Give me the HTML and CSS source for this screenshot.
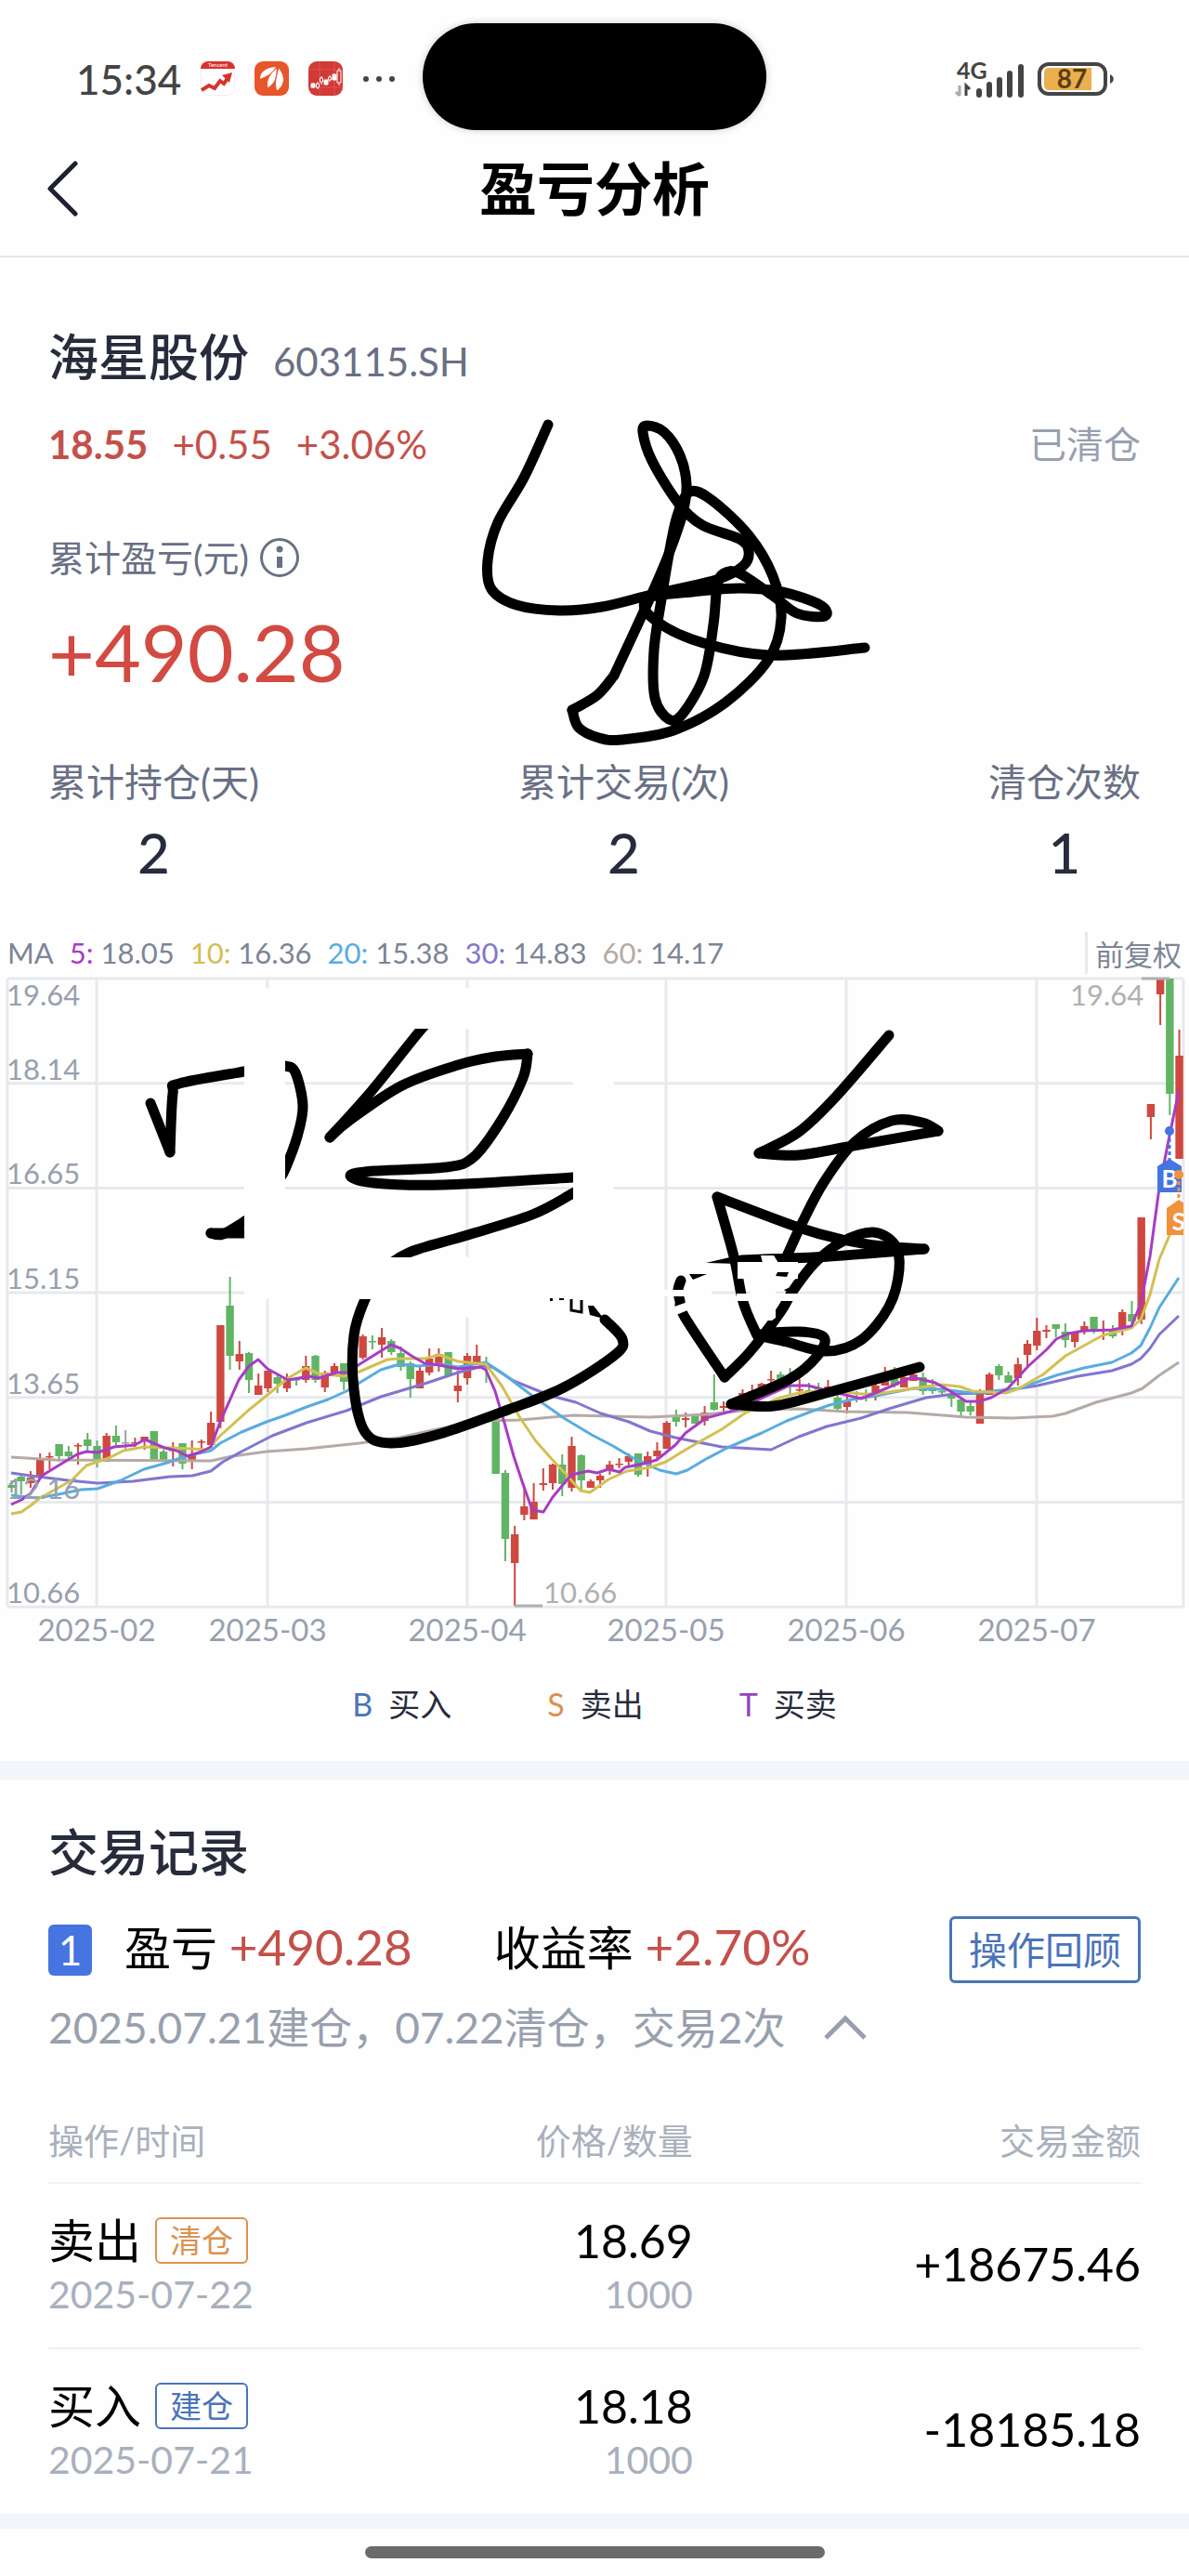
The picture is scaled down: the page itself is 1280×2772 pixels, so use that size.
FILE: index.html
```html
<!DOCTYPE html>
<html lang="zh-CN">
<head>
    <title>盈亏分析</title>
    <meta charset="utf-8">
    <meta name="viewport" content="width=device-width, initial-scale=1">
    <link rel="stylesheet" href="styles.css">
</head>
<body>
    <div class="status-bar">
        <div class="status-left">
            <span class="time">15:34</span>
            <svg class="app-icon" viewBox="0 0 37 37">
                <rect x="0.5" y="0.5" width="36" height="36" rx="8" fill="#fff" stroke="#eee"/>
                <path d="M0 8a8 8 0 0 1 8-8h21a8 8 0 0 1 8 8z" fill="#d8332c"/>
                <text x="18.5" y="6" class="app-text">Tencent</text>
                <path d="M1 31l8-5 6 3 6-8 4 3 5-7" fill="none" stroke="#d8332c" stroke-width="4"/>
                <path d="M23 15l11-3-3 11z" fill="#d8332c"/>
            </svg>
            <svg class="app-icon" viewBox="0 0 37 37">
                <rect width="37" height="37" rx="9" fill="#e8552b"/>
                <path d="M6 19C6 11 12 7 23 6c-3 6-8 9-17 13z" fill="#fff"/>
                <path d="M14 29c-2-10 3-16 10-22 1 10-2 17-10 22zM24 32c-3-8-1-16 2-25 7 8 8 18-2 25z" fill="#fff" stroke="#e8552b"/>
            </svg>
            <svg class="app-icon" viewBox="0 0 37 37">
                <rect width="37" height="37" rx="9" fill="#d23a36"/>
                <path d="M12 0v37M28 0v37M0 9h37M0 28h37" stroke="#e06a64" stroke-width="0.6"/>
                <path d="M3 24h4v4H3zM17 20h4v5h-4zM26 14h4v6h-4zM5 23v6M10 22v8M14 16v9M23 15v7M33 7v19" fill="#fff" stroke="#fff"/>
                <path d="M8.500 24h3v4h-3zM12.500 18h3v4h-3zM21.500 17h3v3h-3zM31 10h4v13h-4z" fill="#d23a36" stroke="#fff"/>
            </svg>
            <svg class="more-dots" viewBox="0 0 36 8">
                <circle cx="4" cy="4" r="3"/><circle cx="18" cy="4" r="3"/><circle cx="32" cy="4" r="3"/>
            </svg>
        </div>
        <div class="island"></div>
        <div class="status-right">
            <svg class="signal" viewBox="0 0 76 50">
                <text x="3" y="25" class="net-text">4G</text>
                <path d="M6 32v11M2 39l4 4" stroke="#aaa" stroke-width="3" fill="none"/>
                <path d="M13 43V32l4 4" stroke-width="3" fill="none"/>
                <path d="M27 38v4M38 31v11M49 26v16M60 19v23M72 12v30" stroke-width="6" stroke-linecap="round"/>
            </svg>
            <svg class="battery" viewBox="0 0 84 36">
                <rect x="2" y="2" width="71" height="32" rx="10" fill="none" stroke="#444" stroke-width="4"/>
                <path d="M12 6h46v24H12a5 5 0 0 1-5-5V11a5 5 0 0 1 5-5z" fill="#eab04e"/>
                <path d="M78 13c5 2 5 8 0 10z" fill="#444"/>
                <text x="37" y="28" class="battery-text">87</text>
            </svg>
        </div>
    </div>

    <header class="nav">
        <a href="#" class="back" aria-label="返回">
            <svg viewBox="0 0 34 60"><path d="M31 3L4 30l27 27" fill="none" stroke="#1d2130" stroke-width="5" stroke-linecap="round" stroke-linejoin="round"/></svg>
        </a>
        <h1>盈亏分析</h1>
    </header>

    <main>
        <section class="summary">
            <div class="stock">
                <h2>海星股份</h2>
                <span class="code">603115.SH</span>
            </div>
            <div class="quote">
                <strong>18.55</strong>
                <span>+0.55</span>
                <span>+3.06%</span>
                <span class="state">已清仓</span>
            </div>
            <div class="profit-label">
                <span>累计盈亏(元)</span>
                <svg class="info" viewBox="0 0 42 42">
                    <circle cx="21" cy="21" r="19.500" fill="none" stroke="#697084" stroke-width="3"/>
                    <circle cx="21" cy="12" r="3.500" fill="#697084"/>
                    <path d="M21 20v12" stroke="#697084" stroke-width="6"/>
                </svg>
            </div>
            <div class="profit">+490.28</div>
            <div class="stats">
                <div><span>累计持仓(天)</span><b>2</b></div>
                <div><span>累计交易(次)</span><b>2</b></div>
                <div><span>清仓次数</span><b>1</b></div>
            </div>
            <svg class="doodle ink" id="doodle" viewBox="0 276 1280 600"></svg>
        </section>

        <section class="chart-box">
            <div class="ma-row">
                <span>MA</span>
                <span><i class="ma5">5:</i> 18.05</span>
                <span><i class="ma10">10:</i> 16.36</span>
                <span><i class="ma20">20:</i> 15.38</span>
                <span><i class="ma30">30:</i> 14.83</span>
                <span><i class="ma60">60:</i> 14.17</span>
                <span class="adjust">前复权</span>
            </div>
            <svg class="chart" viewBox="0 1050 1280 724">
                <defs>
                    <clipPath id="plot"><rect x="7" y="1051" width="1267" height="690"/></clipPath>
                </defs>
                <g id="grid" class="grid"></g>
                <g id="candles"></g>
                <g id="lines" class="lines"></g>
                <g class="mark">
                    <path d="M554 1728h30M1229 1053h30" stroke="#b0b0b0" stroke-width="3"/>
                    <text x="585" y="1725">10.66</text>
                    <text x="1152" y="1082">19.64</text>
                </g>
                <g id="labels" class="labels"></g>
                <g clip-path="url(#plot)">
                    <path d="M1259 1218v34" stroke="#4674e0" stroke-width="3" stroke-dasharray="4 3"/>
                    <circle cx="1259" cy="1217" r="5" fill="#4674e0"/>
                    <path d="M1246 1255l13-8 13 8v28h-26z" fill="#4674e0"/>
                    <text x="1259" y="1278" class="flag">B</text>
                    <path d="M1269 1264v27" stroke="#f0923c" stroke-width="3" stroke-dasharray="4 3"/>
                    <circle cx="1269" cy="1264" r="5" fill="#f0923c"/>
                    <path d="M1256 1300l13-9 13 9v29h-26z" fill="#f0923c"/>
                    <text x="1269" y="1324" class="flag">S</text>
                </g>
                <g id="ink" class="ink"></g>
                <path d="M760 1359l34-8v9zM742 1371h19l-15 6z"/>
                <path class="blank" d="M263 1063h44v335h-44zM307 1063h354v44H307zM617 1063h44v334h-44zM307 1353h354v45H307zM480 1397h60v21h-60zM794 1358h65v18l-13 2-11 12v28l-4 3h-14l-8-26-4-19h-11zM793 1392h67v8h-67zM661 1388h105v7H661zM819 1351h14l5 8h-17zM726 1406l17-6 2 8-17 7z"/>
                <path d="M835 1373l2-4h12l-2 5zM844 1388l12-5v8h-8zM633 1405h6l11 14-15-4zM592 1397h3v3h-3zM602 1397h5v2h-5z"/>
                <path d="M615 1398v12l11 2v-13" fill="none" stroke="#000" stroke-width="3"/>
            </svg>
            <div class="legend">
                <span><i class="buy">B</i>买入</span>
                <span><i class="sell">S</i>卖出</span>
                <span><i class="both">T</i>买卖</span>
            </div>
        </section>

        <section class="records">
            <h2>交易记录</h2>
            <div class="round">
                <span class="num">1</span>
                <span class="item">盈亏 <em>+490.28</em></span>
                <span class="item rate">收益率 <em>+2.70%</em></span>
                <button type="button">操作回顾</button>
            </div>
            <div class="period">
                <span>2025.07.21建仓，07.22清仓，交易2次</span>
                <svg viewBox="0 0 46 28"><path d="M2 25L23 4l21 21" fill="none" stroke="#98a0ae" stroke-width="5"/></svg>
            </div>
            <table>
                <thead>
                    <tr><th>操作/时间</th><th>价格/数量</th><th>交易金额</th></tr>
                </thead>
                <tbody>
                    <tr>
                        <td><div class="main">卖出<span class="tag orange">清仓</span></div><div class="sub">2025-07-22</div></td>
                        <td><div class="main">18.69</div><div class="sub">1000</div></td>
                        <td>+18675.46</td>
                    </tr>
                    <tr>
                        <td><div class="main">买入<span class="tag blue">建仓</span></div><div class="sub">2025-07-21</div></td>
                        <td><div class="main">18.18</div><div class="sub">1000</div></td>
                        <td>-18185.18</td>
                    </tr>
                </tbody>
            </table>
        </section>
    </main>

    <footer class="home"><div class="home-bar"></div></footer>

    <script src="chart.js"></script>
</body>
</html>
```
FILE: styles.css
```css
* {
    box-sizing: border-box;
}
body {
    margin: 0;
    background: #fefefe;
    color: #000;
    font-family: Lato, "Noto Sans CJK SC", sans-serif;
}
h1, h2 {
    margin: 0;
}
i, em {
    font-style: normal;
}
svg {
    display: block;
    flex: none;
}

/* 状态栏 */
.status-bar {
    display: grid;
    grid-template-columns: 1fr 370px 1fr;
    align-items: center;
    height: 140px;
    padding-top: 25px;
}
.island {
    height: 115px;
    border-radius: 58px;
    background: #000;
    box-shadow: 0 0 8px rgba(0, 0, 0, 0.2);
}
.status-left {
    display: flex;
    align-items: center;
    gap: 21px;
    padding: 4px 0 0 82px;
}
.time {
    color: #444;
    font-size: 44px;
    font-weight: 500;
    line-height: 60px;
}
.app-icon {
    width: 37px;
    height: 37px;
}
.app-text {
    fill: #fff;
    font-size: 6px;
    text-anchor: middle;
}
.more-dots {
    width: 36px;
    fill: #444;
}
.status-right {
    display: flex;
    align-items: center;
    justify-content: flex-end;
    gap: 14px;
    padding: 4px 79px 0 0;
}
.signal {
    width: 76px;
    fill: #444;
    stroke: #444;
}
.net-text {
    stroke: none;
    font-size: 25px;
    font-weight: bold;
}
.battery {
    width: 84px;
}
.battery-text {
    fill: #5a3c10;
    font-size: 28px;
    font-weight: bold;
    text-anchor: middle;
}

/* 标题栏 */
.nav {
    display: grid;
    grid-template-columns: 1fr auto 1fr;
    align-items: center;
    height: 137px;
    padding: 0 50px 10px;
    border-bottom: 2px solid #e6e6e8;
}
.back svg {
    width: 34px;
}
.nav h1 {
    font-size: 62px;
    line-height: 80px;
}

/* 汇总 */
.summary {
    position: relative;
    padding: 68px 52px 0;
    color: #697084;
}
.doodle {
    position: absolute;
    top: 0;
    left: 0;
    width: 100%;
    pointer-events: none;
}
.ink path {
    fill: none;
    stroke: #000;
    stroke-width: 11;
    stroke-linecap: round;
    stroke-linejoin: round;
}
.stock {
    display: flex;
    align-items: baseline;
    gap: 26px;
    height: 80px;
}
.stock h2 {
    color: #272c3c;
    font-size: 54px;
    font-weight: 500;
    line-height: 80px;
}
.code {
    font-size: 42px;
}
.quote {
    display: flex;
    gap: 26px;
    margin-top: 23px;
    color: #c4504a;
    font-size: 42px;
    line-height: 60px;
}
.state {
    margin-left: auto;
    color: #98a0ae;
    font-size: 40px;
}
.profit-label {
    display: flex;
    align-items: center;
    gap: 12px;
    margin-top: 62px;
    font-size: 39px;
    line-height: 60px;
}
.info {
    width: 42px;
}
.profit {
    margin-top: 21px;
    color: #d24a42;
    font-size: 86px;
    line-height: 100px;
}
.stats {
    display: flex;
    justify-content: space-between;
    margin-top: 61px;
    text-align: center;
}
.stats span, .stats b {
    display: block;
}
.stats span {
    font-size: 41px;
    line-height: 60px;
}
.stats b {
    margin-top: 10px;
    color: #272c3c;
    font-size: 60px;
    font-weight: 500;
    line-height: 70px;
}

/* K线图 */
.ma-row {
    display: flex;
    align-items: center;
    gap: 17px;
    height: 50px;
    margin-top: 48px;
    padding: 0 8px;
    color: #7c8596;
    font-size: 31px;
}
.ma5 {
    color: #a83cc4;
}
.ma10 {
    color: #d2c052;
}
.ma20 {
    color: #58acdf;
}
.ma30 {
    color: #8176cf;
}
.ma60 {
    color: #b5aaa4;
}
.adjust {
    margin-left: auto;
    padding-left: 8px;
    border-left: 3px solid #e8e9ee;
}
.chart {
    width: 100%;
}
.chart text {
    font-size: 31px;
}
.grid {
    stroke: #e8e9ee;
    stroke-width: 3;
}
.labels text {
    fill: #98a0ae;
}
.labels .date {
    font-size: 33px;
    text-anchor: middle;
}
.mark text {
    fill: #b0b0b0;
}
.lines polyline {
    fill: none;
    stroke-width: 3;
    stroke-linejoin: round;
}
.chart .flag {
    fill: #fff;
    font-size: 26px;
    font-weight: bold;
    text-anchor: middle;
}
.blank {
    fill: #fefefe;
}
.legend {
    display: flex;
    justify-content: center;
    gap: 103px;
    padding: 35px 0 36px;
    border-bottom: 20px solid #f3f5fa;
    color: #272c3c;
    font-size: 34px;
    line-height: 50px;
}
.legend i {
    margin-right: 17px;
}
.buy {
    color: #4a74b8;
}
.sell {
    color: #d99350;
}
.both {
    color: #9544bd;
}

/* 交易记录 */
.records {
    padding: 39px 52px 0;
    border-bottom: 16px solid #f3f5fa;
}
.records h2 {
    color: #272c3c;
    font-size: 54px;
    font-weight: 500;
    line-height: 80px;
}
.round {
    display: flex;
    align-items: center;
    height: 72px;
    margin-top: 28px;
    font-size: 50px;
    line-height: 60px;
}
.item {
    padding-bottom: 6px;
}
.num {
    width: 47px;
    margin-right: 35px;
    border-radius: 6px;
    background: #4674e0;
    color: #fff;
    font-size: 44px;
    line-height: 55px;
    text-align: center;
}
.rate {
    margin-left: 88px;
}
.round em {
    color: #c4504a;
    font-size: 53px;
}
.round button {
    height: 72px;
    margin-left: auto;
    padding: 0 18px 4px;
    border: 3px solid #4a74b8;
    border-radius: 6px;
    background: #fff;
    color: #4a74b8;
    font-family: inherit;
    font-size: 41px;
}
.period {
    display: flex;
    align-items: center;
    gap: 42px;
    margin-top: 18px;
    color: #98a0ae;
    font-size: 46px;
    line-height: 60px;
}
.period svg {
    width: 46px;
}
table {
    width: 100%;
    margin-top: 66px;
    border-collapse: collapse;
    table-layout: fixed;
}
tr {
    border-bottom: 2px solid #f0f0f2;
}
tbody tr:last-child {
    border-bottom: none;
}
th, td {
    padding: 0;
    text-align: right;
}
th {
    height: 71px;
    padding-bottom: 20px;
    color: #a9b0bd;
    font-size: 38px;
    font-weight: normal;
    line-height: 50px;
}
th:first-child, td:first-child {
    width: 30%;
    text-align: left;
}
th:nth-child(2) {
    width: 29%;
}
td {
    height: 178px;
    padding-bottom: 5px;
    font-size: 50px;
}
.main {
    display: flex;
    align-items: center;
    line-height: 66px;
}
td:nth-child(2) .main {
    justify-content: flex-end;
}
.sub {
    color: #a9b0bd;
    font-size: 41px;
    line-height: 50px;
}
.tag {
    margin-left: 15px;
    padding: 0 14px;
    border: 2px solid;
    border-radius: 6px;
    font-size: 34px;
    line-height: 46px;
}
.orange {
    color: #d99350;
}
.blue {
    color: #4a74b8;
}

.home {
    padding: 19px 0;
}
.home-bar {
    width: 495px;
    height: 13px;
    margin: 0 auto;
    border-radius: 7px;
    background: #6b6b6b;
}
```
FILE: chart.js
```js
const NS = 'http://www.w3.org/2000/svg';
const RED = '#cf4840';
const GREEN = '#60b464';
const GRAY = '#98a0ae';

// 颜色, 最高, 实体上沿, 实体下沿, 最低 (画布纵坐标)
const candles = [
    'g 1593 1598 1601 1606', 'g 1586 1589 1594 1608', 'r 1583 1590 1596 1601', 'r 1564 1571 1589 1590',
    'r 1563 1567 1568 1581', 'g 1554 1554 1567 1573', 'g 1556 1562 1567 1570', 'r 1553 1555 1556 1576',
    'g 1542 1549 1556 1562', 'g 1550 1556 1572 1579', 'r 1542 1545 1573 1573', 'g 1534 1545 1552 1557',
    'x 1539 1552 1553 1560', 'r 1547 1552 1553 1557', 'r 1546 1546 1550 1560', 'g 1540 1540 1572 1572',
    'g 1560 1562 1572 1573', 'r 1552 1560 1561 1578', 'g 1553 1553 1575 1581', 'r 1550 1565 1571 1581',
    'r 1549 1551 1552 1560', 'r 1519 1531 1555 1557', 'r 1426 1426 1530 1537', 'g 1374 1405 1459 1474',
    'r 1443 1457 1465 1474', 'g 1455 1456 1485 1499', 'r 1478 1491 1501 1501', 'r 1475 1475 1494 1498',
    'g 1480 1482 1489 1499', 'r 1478 1483 1494 1498', 'g 1482 1484 1485 1491', 'r 1459 1470 1485 1488',
    'g 1458 1459 1485 1488', 'r 1475 1477 1493 1498', 'r 1467 1470 1477 1478', 'g 1467 1467 1487 1496',
    'r 1465 1467 1480 1482', 'r 1436 1438 1461 1463', 'g 1437 1443 1444 1452', 'r 1429 1439 1447 1461',
    'g 1441 1443 1455 1458', 'g 1449 1456 1471 1475', 'g 1465 1467 1484 1504', 'r 1471 1475 1494 1494',
    'r 1451 1462 1477 1480', 'r 1451 1457 1469 1476', 'g 1455 1455 1480 1480', 'r 1475 1491 1497 1509',
    'r 1456 1459 1483 1490', 'r 1447 1459 1466 1468', 'g 1460 1469 1471 1488', 'g 1529 1529 1586 1586',
    'g 1582 1585 1656 1680', 'r 1642 1651 1682 1728', 'r 1599 1621 1630 1636', 'r 1596 1616 1635 1635',
    'r 1580 1596 1598 1604', 'r 1575 1576 1596 1603', 'g 1565 1576 1597 1610', 'r 1546 1556 1601 1605',
    'g 1565 1566 1593 1605', 'r 1592 1594 1601 1601', 'r 1586 1588 1593 1601', 'r 1572 1576 1581 1587',
    'r 1569 1575 1576 1580', 'r 1564 1567 1573 1579', 'g 1564 1564 1587 1589', 'r 1562 1567 1576 1589',
    'r 1552 1561 1567 1570', 'r 1529 1531 1559 1559', 'g 1517 1524 1530 1535', 'r 1520 1526 1528 1536',
    'g 1522 1522 1532 1532', 'r 1513 1520 1529 1534', 'g 1479 1509 1517 1518', 'r 1508 1513 1515 1520',
    'r 1504 1506 1511 1511', 'r 1495 1499 1509 1509', 'r 1490 1497 1506 1506', 'r 1488 1489 1504 1504',
    'r 1475 1484 1485 1491', 'g 1476 1479 1486 1488', 'g 1472 1482 1483 1502', 'r 1484 1495 1496 1502',
    'g 1488 1496 1497 1500', 'g 1488 1494 1495 1500', 'r 1485 1492 1497 1499', 'g 1493 1504 1516 1517',
    'r 1500 1508 1514 1521', 'g 1497 1503 1504 1509', 'g 1495 1502 1503 1508', 'r 1488 1491 1503 1507',
    'r 1471 1479 1491 1491', 'g 1471 1477 1491 1493', 'r 1477 1482 1493 1493', 'r 1475 1479 1486 1486',
    'g 1477 1482 1497 1501', 'g 1484 1493 1497 1500', 'g 1490 1497 1498 1502', 'g 1495 1500 1505 1514',
    'g 1504 1506 1519 1523', 'g 1509 1513 1519 1523', 'r 1495 1497 1532 1532', 'r 1477 1479 1501 1501',
    'g 1468 1470 1480 1485', 'g 1476 1480 1488 1488', 'r 1461 1468 1483 1491', 'r 1442 1446 1458 1471',
    'r 1418 1432 1448 1453', 'r 1426 1431 1433 1440', 'g 1425 1425 1430 1439', 'g 1424 1433 1442 1450',
    'r 1433 1434 1444 1450', 'r 1422 1427 1432 1436', 'g 1417 1417 1431 1435', 'r 1421 1431 1432 1442',
    'g 1426 1431 1438 1440', 'r 1409 1412 1430 1437', 'g 1400 1414 1422 1424', 'r 1310 1310 1420 1425',
    'r 1188 1188 1202 1226', 'r 1053 1053 1070 1103', 'g 1053 1053 1177 1200', 'r 1108 1136 1247 1247'
];

const averages = [
    ['#b5aaa4', '12,1568 60,1571 227,1572 250,1567 287,1562 330,1559 387,1553 430,1547 470,1538 520,1529 560,1528 617,1523 700,1525 760,1522 810,1517 860,1516 910,1519 977,1520 1040,1525 1090,1526 1133,1524 1147,1521 1180,1509 1218,1499 1230,1494 1248,1480 1269,1466'],
    ['#8176cf', '12,1585 33,1588 73,1593 105,1596 143,1594 183,1589 207,1588 227,1583 240,1573 260,1562 293,1545 330,1531 373,1518 410,1503 430,1497 460,1488 493,1477 520,1470 530,1471 553,1486 593,1502 620,1509 647,1521 677,1530 700,1540 727,1547 777,1557 830,1560 860,1546 890,1535 927,1526 960,1515 997,1504 1027,1500 1060,1499 1085,1496 1117,1491 1160,1481 1197,1475 1218,1468 1228,1462 1238,1451 1248,1436 1269,1416'],
    ['#58acdf', '12,1609 40,1612 63,1608 87,1603 105,1602 130,1593 155,1581 180,1574 200,1567 227,1561 237,1553 260,1541 287,1530 307,1523 330,1514 353,1506 373,1497 387,1488 410,1474 430,1468 450,1470 473,1468 493,1471 523,1466 540,1477 573,1502 607,1526 637,1544 660,1556 680,1568 710,1582 728,1586 740,1582 760,1570 783,1558 820,1542 847,1529 873,1519 893,1512 917,1506 943,1502 983,1494 1013,1495 1047,1499 1067,1497 1097,1494 1117,1487 1137,1480 1167,1472 1197,1466 1218,1456 1228,1448 1238,1429 1248,1407 1269,1375'],
    ['#d2c052', '12,1629 23,1627 33,1620 43,1612 77,1593 93,1577 117,1569 133,1561 155,1557 187,1558 223,1560 237,1545 267,1518 310,1483 329,1472 343,1478 370,1481 387,1476 417,1463 430,1462 457,1462 473,1458 493,1465 523,1468 540,1491 560,1526 577,1551 593,1569 607,1584 625,1604 635,1606 655,1592 675,1583 700,1579 717,1573 738,1560 777,1538 803,1520 840,1504 860,1499 893,1496 927,1500 943,1500 977,1495 1013,1490 1033,1492 1047,1497 1083,1499 1097,1494 1123,1479 1147,1459 1187,1437 1218,1429 1228,1420 1238,1393 1248,1355 1260,1327'],
    ['#a83cc4', '12,1619 23,1614 33,1607 45,1588 63,1577 83,1565 93,1562 105,1563 123,1557 145,1555 156,1549 177,1558 190,1561 202,1567 217,1562 227,1557 237,1530 257,1485 268,1470 278,1463 288,1473 310,1485 333,1481 343,1483 362,1477 375,1477 387,1468 421,1447 431,1451 443,1459 457,1467 473,1469 493,1473 517,1471 523,1474 533,1497 543,1531 553,1567 563,1597 573,1625 585,1627 595,1611 615,1587 633,1583 643,1585 655,1581 667,1584 673,1579 693,1575 707,1571 727,1555 738,1542 760,1526 793,1517 817,1506 850,1491 870,1491 893,1497 927,1505 947,1497 982,1482 1007,1488 1023,1497 1040,1508 1054,1508 1067,1504 1085,1494 1107,1470 1127,1452 1137,1441 1150,1435 1167,1432 1197,1431 1218,1427 1228,1403 1238,1352 1248,1278 1258,1227 1269,1174']
];

const doodleStrokes = [
    '590,456 564,513 536,561 525,602 529,633 556,650 602,656 648,652 705,638 771,623 800,608 806,592 796,579 756,564 730,540 702,495 692,464 697,457 715,464 732,489 739,520 735,551 720,595 699,644 661,726',
    '661,726 643,747 616,763',
    '616,763 623,782 645,793 669,795 725,785 781,755 827,709 841,664 832,619 806,575 766,537 743,528 730,551 722,585 712,644 704,699 705,750 720,773 735,767 758,726 768,671 772,630 779,616 796,616 832,640 858,659 888,662 883,650 842,636 796,632 745,636 699,642 699,661 745,687 827,704 931,696'
];

const chartStrokes = [
    '162,1187 183,1240',
    '183,1240 186,1177 193,1166 263,1153 290,1148',
    '290,1145 307,1147 318,1154 326,1190 320,1223 307,1258 300,1270',
    '227,1327 240,1328 267,1312',
    '227,1327 267,1327',
    '470,1093 454,1107 400,1174 355,1224',
    '355,1224 377,1205 433,1168 493,1146 533,1137 568,1134',
    '568,1134 563,1160 540,1205 510,1245 480,1256 403,1260 377,1265 403,1273 477,1275 617,1267',
    '640,1272 617,1284 573,1307 500,1330 440,1348 410,1370 393,1398 381,1437 381,1495 393,1541 420,1553 470,1544 547,1517 607,1493 662,1458 670,1441 651,1420',
    '957,1114 900,1180 860,1218 817,1241',
    '817,1241 860,1243 913,1234 1010,1217',
    '1010,1217 993,1208 960,1206 920,1229 887,1272 863,1317 847,1352',
    '815,1437 800,1401 790,1352 772,1288',
    '772,1288 860,1321 907,1334 950,1341 995,1344',
    '995,1344 893,1352 798,1356',
    '733,1378 730,1388 732,1400 737,1417 780,1482',
    '780,1482 807,1455 840,1412 853,1390 877,1359 907,1336 940,1326 963,1339 968,1366 957,1406 927,1442 890,1454 847,1444 818,1436 860,1433 887,1439 880,1459 850,1484 787,1511',
    '787,1511 833,1513 893,1498 990,1471'
];

function add(parent, name, attrs, text) {
    const node = document.createElementNS(NS, name);
    for (const key in attrs) {
        node.setAttribute(key, attrs[key]);
    }
    if (text) {
        node.textContent = text;
    }
    parent.appendChild(node);
    return node;
}

// 把点连成平滑曲线
function smooth(str) {
    const p = str.split(' ').map(s => s.split(',').map(Number));
    let d = 'M' + p[0];
    for (let i = 0; i < p.length - 1; i++) {
        const a = p[i - 1] || p[i];
        const b = p[i];
        const c = p[i + 1];
        const e = p[i + 2] || c;
        d += 'C' + [b[0] + (c[0] - a[0]) / 6, b[1] + (c[1] - a[1]) / 6,
            c[0] - (e[0] - b[0]) / 6, c[1] - (e[1] - b[1]) / 6, c[0], c[1]];
    }
    return d;
}

const grid = document.getElementById('grid');
const labels = document.getElementById('labels');
const prices = ['19.64', '18.14', '16.65', '15.15', '13.65', '12.16', '10.66'];
prices.forEach((price, i) => {
    const y = 1053 + i * 112.7;
    add(grid, 'path', { d: 'M8 ' + y + 'H1274' });
    add(labels, 'text', { x: 7, y: i === 0 ? y + 29 : y - 4 }, price);
});
add(grid, 'path', { d: 'M8 1053V1729M1274 1053V1729' });

const months = { '2025-02': 104, '2025-03': 288, '2025-04': 503, '2025-05': 717, '2025-06': 911, '2025-07': 1116 };
for (const month in months) {
    add(grid, 'path', { d: 'M' + months[month] + ' 1053V1729' });
    add(labels, 'text', { x: months[month], y: 1766, class: 'date' }, month);
}

const candleBox = document.getElementById('candles');
candles.forEach((row, i) => {
    const [type, high, top, bottom, low] = row.split(' ');
    const x = 12.5 + i * 10.22;
    const color = { r: RED, g: GREEN, x: GRAY }[type];
    add(candleBox, 'path', { d: 'M' + x + ' ' + high + 'V' + low, stroke: color, 'stroke-width': 2 });
    add(candleBox, 'rect', { x: x - 4.2, y: top, width: 8.4, height: Math.max(bottom - top, 1.5), fill: color });
});

averages.forEach(([color, points]) => {
    add(document.getElementById('lines'), 'polyline', { points: points, stroke: color });
});

doodleStrokes.forEach(s => add(document.getElementById('doodle'), 'path', { d: smooth(s) }));
chartStrokes.forEach(s => add(document.getElementById('ink'), 'path', { d: smooth(s) }));
```
